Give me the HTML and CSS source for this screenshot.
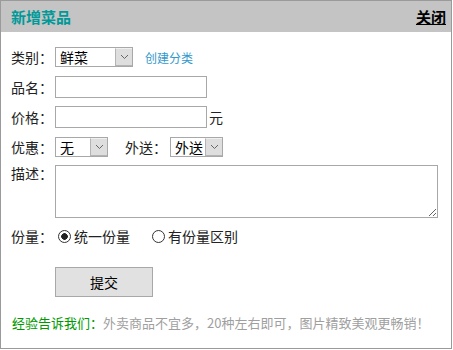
FILE: index.html
```html
<!DOCTYPE html>
<html lang="zh-CN">

<head>
    <meta charset="utf-8">
    <title>新增菜品</title>
    <link rel="stylesheet" href="styles.css">
</head>

<body>
    <div class="panel">
        <div class="panel-head">
            <h3>新增菜品</h3>
            <a href="#" class="luk">关闭</a>
        </div>

        <form class="panel-body">
            <div class="row">
                <span class="label">类别：</span>
                <span class="select sel-kat">
                    <select><option>鲜菜</option></select>
                    <i class="arrow"><svg width="9" height="6" viewBox="0 0 9 6"><polyline points="1,1 4.5,4.5 8,1" fill="none" stroke="#666" stroke-width="1"/></svg></i>
                </span>
                <a href="#" class="link">创建分类</a>
            </div>

            <div class="row">
                <span class="label">品名：</span>
                <input type="text" class="felt">
            </div>

            <div class="row">
                <span class="label">价格：</span>
                <input type="text" class="felt">
                <span class="enhed">元</span>
            </div>

            <div class="row">
                <span class="label">优惠：</span>
                <span class="select sel-lille">
                    <select><option>无</option></select>
                    <i class="arrow"><svg width="9" height="6" viewBox="0 0 9 6"><polyline points="1,1 4.5,4.5 8,1" fill="none" stroke="#666" stroke-width="1"/></svg></i>
                </span>
                <span class="label label-2">外送：</span>
                <span class="select sel-lille">
                    <select><option>外送</option></select>
                    <i class="arrow"><svg width="9" height="6" viewBox="0 0 9 6"><polyline points="1,1 4.5,4.5 8,1" fill="none" stroke="#666" stroke-width="1"/></svg></i>
                </span>
            </div>

            <div class="row row-top">
                <span class="label">描述：</span>
                <textarea></textarea>
            </div>

            <div class="row">
                <span class="label">份量：</span>
                <label class="radio"><input type="radio" name="del" checked>统一份量</label>
                <label class="radio radio-2"><input type="radio" name="del">有份量区别</label>
            </div>

            <div class="knap-row">
                <button type="button">提交</button>
            </div>

            <p class="tip"><b>经验告诉我们：</b>外卖商品不宜多，20种左右即可，图片精致美观更畅销！</p>
        </form>
    </div>
</body>

</html>
```

FILE: styles.css
```css
* {
    margin: 0;
    padding: 0;
    box-sizing: border-box;
}

body {
    margin: 0;
    background-color: #ffffff;
    font-family: "Noto Sans CJK SC", "Liberation Sans", sans-serif;
    font-size: 14px;
    color: #222222;
}

.panel {
    width: 452px;
    height: 349px;
    border: 1px solid #9a9a9a;
    background-color: #ffffff;
}

.panel-head {
    display: flex;
    justify-content: space-between;
    align-items: center;
    height: 31px;
    background-color: #c4c4c4;
    padding-left: 10px;
    padding-right: 5px;
}

.panel-head h3 {
    font-size: 15px;
    font-weight: bold;
    color: #009999;
    line-height: 20px;
}

.luk {
    font-size: 15px;
    font-weight: bold;
    color: #000000;
    text-decoration: underline;
    line-height: 20px;
}

.panel-body {
    padding: 10px 10px 0 10px;
}

.row {
    display: flex;
    align-items: center;
    height: 30px;
}

.row-top {
    align-items: flex-start;
    height: auto;
    padding-top: 3px;
    padding-bottom: 3px;
}

.row-top .label {
    line-height: 16px;
}

.label {
    width: 44px;
    line-height: 20px;
    color: #222222;
    flex-shrink: 0;
}

.label-2 {
    margin-left: 17px;
    width: 45px;
}

.select {
    display: inline-flex;
    height: 20px;
    border: 1px solid #a8a8a8;
    background-color: #ffffff;
}

.select select {
    appearance: none;
    -webkit-appearance: none;
    border: none;
    outline: none;
    background: transparent;
    font-family: inherit;
    font-size: 14px;
    color: #000000;
    padding-left: 4px;
    line-height: 18px;
    flex: 1;
    min-width: 0;
}

.sel-kat {
    width: 78px;
}

.sel-lille {
    width: 53px;
}

.arrow {
    display: flex;
    align-items: center;
    justify-content: center;
    width: 17px;
    background-color: #dedede;
    border: 1px solid #b4b4b4;
    border-right: none;
    border-top-color: #f0f0f0;
}

.link {
    margin-left: 12px;
    font-size: 12px;
    color: #3399cc;
    text-decoration: none;
}

.felt {
    width: 152px;
    height: 22px;
    border: 1px solid #a8a8a8;
    outline: none;
    font-family: inherit;
    font-size: 14px;
    padding: 0 3px;
}

.enhed {
    margin-left: 2px;
}

textarea {
    width: 383px;
    height: 53px;
    border: 1px solid #a8a8a8;
    outline: none;
    font-family: inherit;
    font-size: 14px;
}

.radio {
    display: flex;
    align-items: center;
    line-height: 20px;
    color: #222222;
}

.radio input {
    appearance: none;
    -webkit-appearance: none;
    width: 13px;
    height: 13px;
    border: 1px solid #333333;
    border-radius: 50%;
    margin: 0 3px 0 3px;
    background-color: #ffffff;
}

.radio input:checked {
    background: radial-gradient(circle, #222222 0 3px, #ffffff 3.6px);
}

.radio-2 {
    margin-left: 19px;
}

.knap-row {
    padding-left: 44px;
    margin-top: 16px;
}

button {
    width: 98px;
    height: 30px;
    background-color: #e1e1e1;
    border: 1px solid #a8a8a8;
    font-family: inherit;
    font-size: 14px;
    color: #000000;
}

.tip {
    margin-top: 16px;
    padding-left: 1px;
    font-size: 13px;
    line-height: 20px;
    color: #9f9f9f;
}

.tip b {
    font-weight: normal;
    color: #009900;
}
```
